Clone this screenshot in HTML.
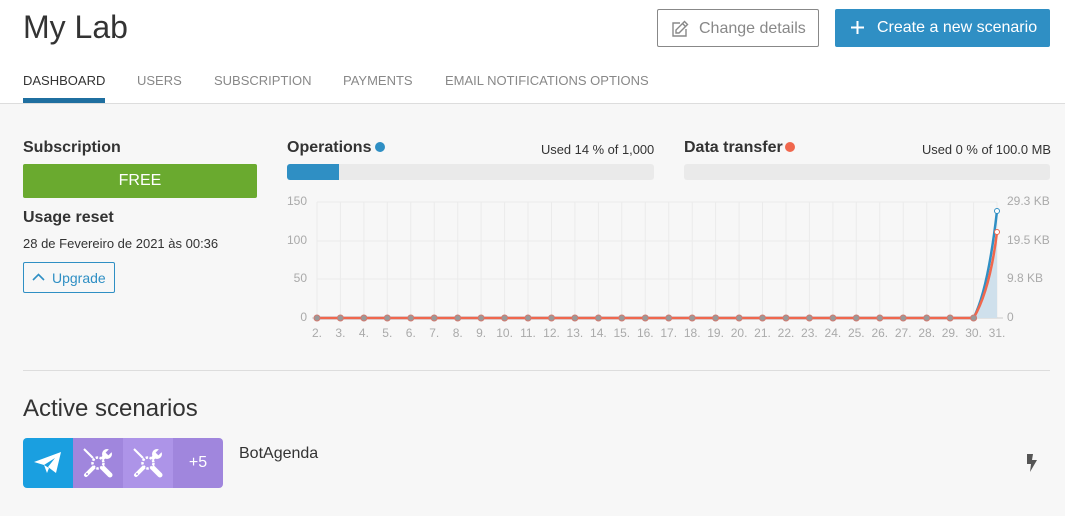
<!DOCTYPE html>
<html><head><meta charset="utf-8"><style>
*{margin:0;padding:0;box-sizing:border-box}
body{width:1065px;height:516px;overflow:hidden;background:#f7f7f7;font-family:"Liberation Sans",sans-serif;position:relative;color:#333}
.hdr{position:absolute;left:0;top:0;width:1065px;height:104px;background:#fff;border-bottom:1px solid #ddd}
.a{position:absolute;white-space:nowrap}
.tab{position:absolute;top:73px;font-size:13px;color:#888}
.btn1{position:absolute;left:657px;top:9px;width:162px;height:38px;border:1px solid #888;border-radius:2px;background:#fff;color:#888;font-size:16px}
.btn2{position:absolute;left:835px;top:9px;width:215px;height:38px;background:#2f8fc4;border-radius:2px;color:#fff;font-size:16px}
.bar{position:absolute;height:16px;background:#eaeaea;border-radius:3px;overflow:hidden}
</style></head><body>
<div class="hdr"></div>
<div class="a" style="left:23px;top:9px;font-size:32px;color:#333">My Lab</div>
<div class="btn1"><svg style="position:absolute;left:13px;top:10px" width="18" height="18" viewBox="0 0 18 18" fill="none" stroke="#888" stroke-width="1.4"><path d="M9 3H2v13h13V9"/><path d="M13.5 1.5l3 3L8 13H5v-3z"/><path d="M11.5 3.5l3 3"/></svg><span class="a" style="left:41px;top:10px">Change details</span></div>
<div class="btn2"><svg style="position:absolute;left:16px;top:12px" width="13" height="13" viewBox="0 0 13 13" stroke="#fff" stroke-width="2"><path d="M6.5 0v13M0 6.5h13"/></svg><span class="a" style="left:42px;top:10px">Create a new scenario</span></div>
<div class="tab" style="left:23px;color:#333">DASHBOARD</div>
<div class="a" style="left:23px;top:98px;width:82px;height:5px;background:#1f6fa0"></div>
<div class="tab" style="left:137px">USERS</div>
<div class="tab" style="left:214px">SUBSCRIPTION</div>
<div class="tab" style="left:343px">PAYMENTS</div>
<div class="tab" style="left:445px">EMAIL NOTIFICATIONS OPTIONS</div>

<div class="a" style="left:23px;top:139px;font-size:16px;font-weight:bold">Subscription</div>
<div class="a" style="left:23px;top:164px;width:234px;height:34px;background:#6aaa2f;border-radius:2px;color:#fff;font-size:16px;text-align:center;line-height:34px">FREE</div>
<div class="a" style="left:23px;top:209px;font-size:16px;font-weight:bold">Usage reset</div>
<div class="a" style="left:23px;top:236px;font-size:13px">28 de Fevereiro de 2021 às 00:36</div>
<div class="a" style="left:23px;top:262px;width:92px;height:31px;border:1px solid #2f8fc4;border-radius:2px;color:#2f8fc4;font-size:14px"><svg style="position:absolute;left:8px;top:10px" width="13" height="9" viewBox="0 0 13 9" fill="none" stroke="#2f8fc4" stroke-width="1.6"><path d="M1 7l5.5-5.5L12 7"/></svg><span class="a" style="left:28px;top:7px">Upgrade</span></div>

<div class="a" style="left:287px;top:139px;font-size:16px;font-weight:bold">Operations <span style="display:inline-block;width:10px;height:10px;border-radius:5px;background:#2f8fc4;margin-left:-1px"></span></div>
<div class="a" style="left:541px;top:142px;font-size:12.9px">Used 14 % of 1,000</div>
<div class="bar" style="left:287px;top:164px;width:367px"><div style="width:52px;height:16px;background:#2f8fc4"></div></div>
<div class="a" style="left:684px;top:139px;font-size:16px;font-weight:bold">Data transfer <span style="display:inline-block;width:10px;height:10px;border-radius:5px;background:#f0674d;margin-left:-2px"></span></div>
<div class="a" style="left:922px;top:142px;font-size:12.9px">Used 0 % of 100.0 MB</div>
<div class="bar" style="left:684px;top:164px;width:366px"></div>

<svg class="a" style="left:0;top:0" width="1065" height="516" font-family="Liberation Sans,sans-serif" font-size="12" fill="#aaa">
<g stroke="#ebebeb" stroke-width="1">
<line x1="317" y1="202" x2="997" y2="202"/><line x1="317" y1="241" x2="997" y2="241"/><line x1="317" y1="279" x2="997" y2="279"/>
<path d="M317 202V318M340.4 202V318M363.9 202V318M387.3 202V318M410.8 202V318M434.2 202V318M457.7 202V318M481.1 202V318M504.6 202V318M528 202V318M551.5 202V318M574.9 202V318M598.4 202V318M621.8 202V318M645.3 202V318M668.7 202V318M692.2 202V318M715.6 202V318M739.1 202V318M762.5 202V318M786 202V318M809.4 202V318M832.9 202V318M856.3 202V318M879.8 202V318M903.2 202V318M926.7 202V318M950.1 202V318M973.6 202V318M997 202V318"/>
</g>
<line x1="312" y1="318" x2="1003" y2="318" stroke="#ccc"/>
<g text-anchor="end"><text x="307" y="205">150</text><text x="307" y="244">100</text><text x="307" y="282">50</text><text x="307" y="321">0</text></g>
<g><text x="1007" y="205">29.3 KB</text><text x="1007" y="244">19.5 KB</text><text x="1007" y="282">9.8 KB</text><text x="1007" y="321">0</text></g>
<path d="M973.6 318Q990 290 997 232V318Z" fill="#cfe0ec"/>
<path d="M317 318H973.6Q988 290 997 211" fill="none" stroke="#2f8fc4" stroke-width="2.5"/>
<path d="M317 318H973.6Q990 290 997 232" fill="none" stroke="#f0674d" stroke-width="2.5"/>
<g fill="#999" stroke="#d07a70" stroke-width="1">
<circle cx="317" cy="318" r="3"/><circle cx="340.4" cy="318" r="3"/><circle cx="363.9" cy="318" r="3"/><circle cx="387.3" cy="318" r="3"/><circle cx="410.8" cy="318" r="3"/><circle cx="434.2" cy="318" r="3"/><circle cx="457.7" cy="318" r="3"/><circle cx="481.1" cy="318" r="3"/><circle cx="504.6" cy="318" r="3"/><circle cx="528" cy="318" r="3"/><circle cx="551.5" cy="318" r="3"/><circle cx="574.9" cy="318" r="3"/><circle cx="598.4" cy="318" r="3"/><circle cx="621.8" cy="318" r="3"/><circle cx="645.3" cy="318" r="3"/><circle cx="668.7" cy="318" r="3"/><circle cx="692.2" cy="318" r="3"/><circle cx="715.6" cy="318" r="3"/><circle cx="739.1" cy="318" r="3"/><circle cx="762.5" cy="318" r="3"/><circle cx="786" cy="318" r="3"/><circle cx="809.4" cy="318" r="3"/><circle cx="832.9" cy="318" r="3"/><circle cx="856.3" cy="318" r="3"/><circle cx="879.8" cy="318" r="3"/><circle cx="903.2" cy="318" r="3"/><circle cx="926.7" cy="318" r="3"/><circle cx="950.1" cy="318" r="3"/><circle cx="973.6" cy="318" r="3"/>
</g>
<circle cx="997" cy="211" r="2.5" fill="#fff" stroke="#2f8fc4"/><circle cx="997" cy="232" r="2.5" fill="#fff" stroke="#f0674d"/>
<g text-anchor="middle"><text x="317" y="337">2.</text><text x="340.4" y="337">3.</text><text x="363.9" y="337">4.</text><text x="387.3" y="337">5.</text><text x="410.8" y="337">6.</text><text x="434.2" y="337">7.</text><text x="457.7" y="337">8.</text><text x="481.1" y="337">9.</text><text x="504.6" y="337">10.</text><text x="528" y="337">11.</text><text x="551.5" y="337">12.</text><text x="574.9" y="337">13.</text><text x="598.4" y="337">14.</text><text x="621.8" y="337">15.</text><text x="645.3" y="337">16.</text><text x="668.7" y="337">17.</text><text x="692.2" y="337">18.</text><text x="715.6" y="337">19.</text><text x="739.1" y="337">20.</text><text x="762.5" y="337">21.</text><text x="786" y="337">22.</text><text x="809.4" y="337">23.</text><text x="832.9" y="337">24.</text><text x="856.3" y="337">25.</text><text x="879.8" y="337">26.</text><text x="903.2" y="337">27.</text><text x="926.7" y="337">28.</text><text x="950.1" y="337">29.</text><text x="973.6" y="337">30.</text><text x="997" y="337">31.</text></g>
</svg>

<div class="a" style="left:23px;top:370px;width:1027px;height:1px;background:#ddd"></div>
<div class="a" style="left:23px;top:395px;font-size:24px">Active scenarios</div>
<div class="a" style="left:23px;top:438px;width:200px;height:50px;border-radius:4px;overflow:hidden;display:flex">
<div style="width:50px;background:#1a9fe0;position:relative"><svg style="position:absolute;left:10px;top:13px" width="30" height="24" viewBox="0 0 30 24"><path d="M1 11L28 1 23 22 15 16 22 7 11 14z" fill="#fff"/><path d="M11 14l5 3-2 5z" fill="#fff"/></svg></div>
<div style="width:50px;background:#a086dd;position:relative"><svg style="position:absolute;left:9px;top:9px" width="32" height="32" viewBox="0 0 32 32" fill="none" stroke="#fff"><path d="M2 2l9 9" stroke-width="2"/><path d="M20 20l8 8" stroke-width="5" stroke-linecap="round"/><path d="M23 9L4 28" stroke-width="4" stroke-linecap="round"/><circle cx="25" cy="7" r="5" fill="#fff" stroke="none"/><path d="M25 7l5-5" stroke="#a086dd" stroke-width="4"/><circle cx="16" cy="16" r="5.5" fill="#a086dd" stroke-width="2.5" stroke-dasharray="2.5 1.4"/><circle cx="5" cy="27" r="1" fill="#a086dd" stroke="none"/></svg></div>
<div style="width:50px;background:#ad94e8;position:relative"><svg style="position:absolute;left:9px;top:9px" width="32" height="32" viewBox="0 0 32 32" fill="none" stroke="#fff"><path d="M2 2l9 9" stroke-width="2"/><path d="M20 20l8 8" stroke-width="5" stroke-linecap="round"/><path d="M23 9L4 28" stroke-width="4" stroke-linecap="round"/><circle cx="25" cy="7" r="5" fill="#fff" stroke="none"/><path d="M25 7l5-5" stroke="#ad94e8" stroke-width="4"/><circle cx="16" cy="16" r="5.5" fill="#ad94e8" stroke-width="2.5" stroke-dasharray="2.5 1.4"/><circle cx="5" cy="27" r="1" fill="#ad94e8" stroke="none"/></svg></div>
<div style="width:50px;background:#a086dd;color:#fff;font-size:16px;text-align:center;line-height:50px">+5</div>
</div>
<div class="a" style="left:239px;top:445px;font-size:16px">BotAgenda</div>
<svg class="a" style="left:1026px;top:454px" width="12" height="18" viewBox="0 0 12 18"><path d="M1 0h6l-1 6h5L4 18l1-8H1z" fill="#555"/></svg>
</body></html>
